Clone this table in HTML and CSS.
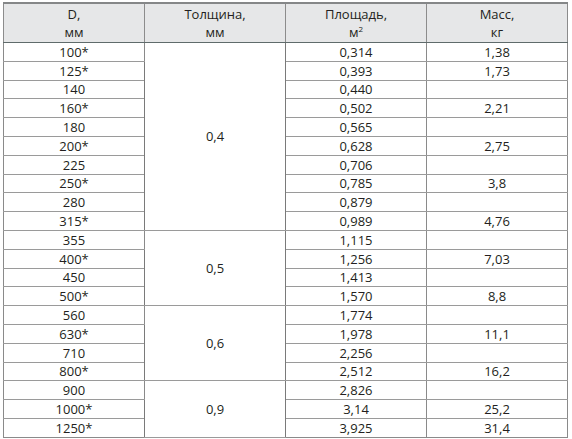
FILE: index.html
```html
<!DOCTYPE html>
<html lang="ru">
<head>
<meta charset="utf-8">
<link rel="stylesheet" href="styles.css">
</head>
<body>
<div class="wrap">
<table class="spec">
<thead>
<tr><th>D,<br>мм</th><th>Толщина,<br>мм</th><th>Площадь,<br>м<sup>2</sup></th><th>Масс,<br>кг</th></tr>
</thead>
<tbody>
<tr><td>100*</td><td rowspan="10" class="merged">0,4</td><td>0,314</td><td>1,38</td></tr>
<tr><td>125*</td><td>0,393</td><td>1,73</td></tr>
<tr><td>140</td><td>0,440</td><td></td></tr>
<tr><td>160*</td><td>0,502</td><td>2,21</td></tr>
<tr><td>180</td><td>0,565</td><td></td></tr>
<tr><td>200*</td><td>0,628</td><td>2,75</td></tr>
<tr><td>225</td><td>0,706</td><td></td></tr>
<tr><td>250*</td><td>0,785</td><td>3,8</td></tr>
<tr><td>280</td><td>0,879</td><td></td></tr>
<tr><td>315*</td><td>0,989</td><td>4,76</td></tr>
<tr><td>355</td><td rowspan="4" class="merged">0,5</td><td>1,115</td><td></td></tr>
<tr><td>400*</td><td>1,256</td><td>7,03</td></tr>
<tr><td>450</td><td>1,413</td><td></td></tr>
<tr><td>500*</td><td>1,570</td><td>8,8</td></tr>
<tr><td>560</td><td rowspan="4" class="merged">0,6</td><td>1,774</td><td></td></tr>
<tr><td>630*</td><td>1,978</td><td>11,1</td></tr>
<tr><td>710</td><td>2,256</td><td></td></tr>
<tr><td>800*</td><td>2,512</td><td>16,2</td></tr>
<tr><td>900</td><td rowspan="3" class="merged">0,9</td><td>2,826</td><td></td></tr>
<tr><td>1000*</td><td>3,14</td><td>25,2</td></tr>
<tr><td>1250*</td><td>3,925</td><td>31,4</td></tr>
</tbody>
</table>
</div>
</body>
</html>
```
FILE: styles.css
```css
html, body {
  margin: 0;
  padding: 0;
  background: #ffffff;
}
.wrap {
  padding: 2px 4px 0 3px;
}
.spec {
  width: 565px;
  border-collapse: collapse;
  table-layout: fixed;
  font-family: "Open Sans", "Liberation Sans", sans-serif;
  font-size: 13px;
  color: #231f20;
}
.spec th {
  background: #e6e7e8;
  font-weight: normal;
  line-height: 18px;
  height: 38px;
  padding: 0;
  text-align: center;
  vertical-align: middle;
  border-left: 1px solid #8c8c8c;
  border-right: 1px solid #8c8c8c;
  border-top: 2px solid #858788;
  border-bottom: 1px solid #5f6b6b;
}
.spec th sup {
  font-size: 8px;
  line-height: 0;
  vertical-align: 5px;
}
.spec td {
  height: 17.8px;
  padding: 0;
  line-height: 16px;
  text-align: center;
  vertical-align: middle;
  border: 1px solid #9a9a9a;
  border-left-color: #8a8a8a;
  border-right-color: #8a8a8a;
}
.spec tbody tr:last-child td {
  border-bottom-color: #8a8a8a;
}
.spec td.merged {
  border-left-color: #7a7a7a;
  border-right-color: #7a7a7a;
}
```
